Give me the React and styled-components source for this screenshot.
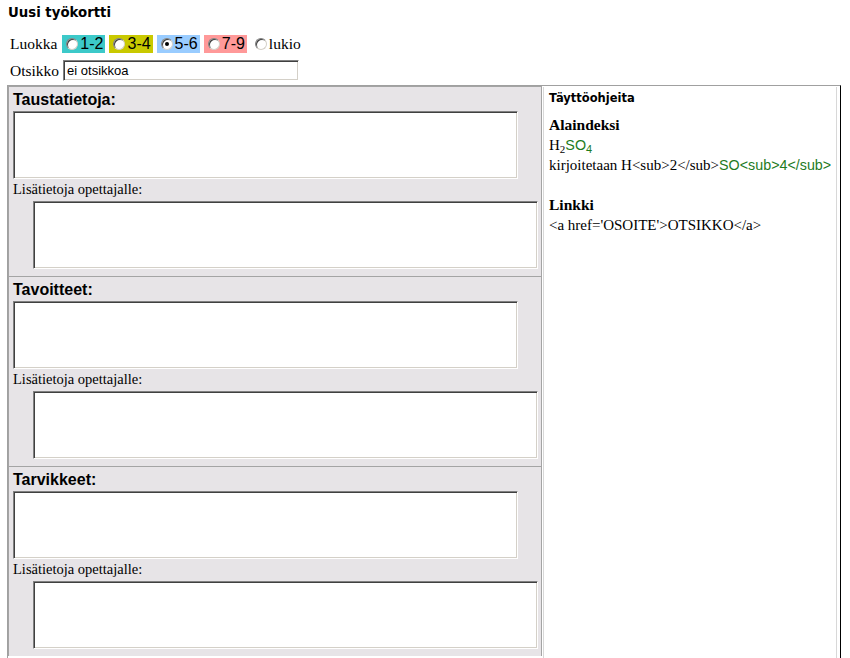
import React from "react";
import styled, { createGlobalStyle } from "styled-components";

const GlobalStyle = createGlobalStyle`
  html, body {
    margin: 0;
    padding: 0;
    background: #fff;
    color: #000;
    font-family: "Liberation Serif", "Times New Roman", serif;
  }
`;

const Page = styled.div`
  padding-top: 5px;
  width: 850px;
  height: 658px;
  overflow: hidden;
`;

const Title = styled.div`
  margin-left: 8px;
  font-family: "DejaVu Sans", Verdana, sans-serif;
  font-weight: bold;
  font-size: 13.3px;
  line-height: 16px;
`;

const FormRow = styled.div`
  display: flex;
  align-items: center;
  margin-left: 10px;
  margin-top: ${(p) => p.$top}px;
  height: ${(p) => p.$height}px;
  font-size: 15.5px;
`;

const RowLabel = styled.span`
  margin-right: ${(p) => p.$gap || 4}px;
`;

const Choice = styled.label`
  display: flex;
  align-items: center;
  height: 18px;
  padding: 0 2px 0 4px;
  margin-right: 4px;
  background: ${(p) => p.$bg || "transparent"};
  font-family: ${(p) =>
    p.$serif ? '"Liberation Serif", serif' : '"Liberation Sans", Arial, sans-serif'};
  font-size: ${(p) => (p.$serif ? 15.5 : 16)}px;
`;

const Radio = styled.span`
  position: relative;
  display: inline-block;
  box-sizing: border-box;
  width: 12px;
  height: 12px;
  margin-right: 2px;
  border-radius: 50%;
  background: #fff;
  border: 1px solid #808080;
  border-right-color: #d4d0c8;
  border-bottom-color: #d4d0c8;
  box-shadow: inset 1px 1px 0 #404040;

  &::after {
    content: "";
    display: ${(p) => (p.$checked ? "block" : "none")};
    position: absolute;
    left: 3px;
    top: 3px;
    width: 4px;
    height: 4px;
    border-radius: 50%;
    background: #000;
  }
`;

const TextInput = styled.div`
  box-sizing: border-box;
  width: 236px;
  height: 21px;
  padding: 1px 3px;
  background: #fff;
  border: 1px solid #808080;
  border-right-color: #fff;
  border-bottom-color: #fff;
  box-shadow: inset 1px 1px 0 #404040, inset -1px -1px 0 #d4d0c8;
  font-family: "Liberation Sans", Arial, sans-serif;
  font-size: 13px;
  line-height: 17px;
`;

const Table = styled.div`
  display: flex;
  box-sizing: border-box;
  width: 834px;
  height: 580px;
  margin: 4px 0 0 7px;
  background: #fff;
  border-top: 1px solid #a0a0a0;
  border-left: 1px solid #a0a0a0;
  border-right: 1px solid #000;
`;

const LeftCol = styled.div`
  width: 534px;
  flex-shrink: 0;
  display: flex;
  flex-direction: column;
`;

const Section = styled.div`
  box-sizing: border-box;
  height: 190px;
  flex-shrink: 0;
  padding: 4px 0 7px 4px;
  background: #e7e4e7;
  border-top: 1px solid #a4a4a4;
  border-left: 1px solid #a4a4a4;
  border-right: 1px solid #a4a4a4;
`;

const Heading = styled.div`
  font-family: "Liberation Sans", Arial, sans-serif;
  font-weight: bold;
  font-size: 16px;
  line-height: 18px;
`;

const Area = styled.div`
  box-sizing: border-box;
  width: 505px;
  height: 68px;
  margin-top: ${(p) => p.$top}px;
  margin-left: ${(p) => p.$indent || 0}px;
  background: #fff;
  border: 1px solid #808080;
  border-right-color: #fff;
  border-bottom-color: #fff;
  box-shadow: inset 1px 1px 0 #404040, inset -1px -1px 0 #d4d0c8;
`;

const SubLabel = styled.div`
  margin-top: 2px;
  font-size: 14.5px;
  line-height: 16px;
`;

const RightCol = styled.div`
  flex: 1;
  margin: 1px 3px 0 1px;
  padding: 3px 5px;
  border-left: 1px solid #d8d8d8;
  border-right: 1px solid #d8d8d8;
  font-size: 15px;
  line-height: 20px;
`;

const HelpTitle = styled.div`
  font-family: "DejaVu Sans", Verdana, sans-serif;
  font-weight: bold;
  font-size: 11.5px;
  line-height: 16px;
  margin-bottom: 9px;
`;

const HelpHead = styled.div`
  font-weight: bold;
  font-size: 15.5px;
`;

const HelpLine = styled.div`
  white-space: nowrap;
  height: 20px;
`;

const Green = styled.span`
  color: #1e7b1e;
  font-family: "Liberation Sans", Arial, sans-serif;
  font-size: 14.3px;
`;

const Sub = styled.sub`
  font-size: 11px;
  line-height: 0;
  vertical-align: -3px;
`;

const classes = [
  { label: "1-2", bg: "#3cc9c9" },
  { label: "3-4", bg: "#c9c900" },
  { label: "5-6", bg: "#99ccff", checked: true },
  { label: "7-9", bg: "#ff9999" },
  { label: "lukio", serif: true },
];

const sections = ["Taustatietoja:", "Tavoitteet:", "Tarvikkeet:"];

function App() {
  return (
    <Page>
      <GlobalStyle />
      <Title>Uusi työkortti</Title>

      <FormRow $top={14} $height={18}>
        <RowLabel $gap={5}>Luokka</RowLabel>
        {classes.map((c) => (
          <Choice key={c.label} $bg={c.bg} $serif={c.serif}>
            <Radio $checked={c.checked} />
            {c.label}
          </Choice>
        ))}
      </FormRow>

      <FormRow $top={7} $height={21}>
        <RowLabel>Otsikko</RowLabel>
        <TextInput>ei otsikkoa</TextInput>
      </FormRow>

      <Table>
        <LeftCol>
          {sections.map((s) => (
            <Section key={s}>
              <Heading>{s}</Heading>
              <Area $top={2} />
              <SubLabel>Lisätietoja opettajalle:</SubLabel>
              <Area $top={4} $indent={20} />
            </Section>
          ))}
        </LeftCol>

        <RightCol>
          <HelpTitle>Täyttöohjeita</HelpTitle>
          <HelpHead>Alaindeksi</HelpHead>
          <HelpLine>
            H<Sub>2</Sub>
            <Green>
              SO<Sub>4</Sub>
            </Green>
          </HelpLine>
          <HelpLine>
            kirjoitetaan H&lt;sub&gt;2&lt;/sub&gt;
            <Green>SO&lt;sub&gt;4&lt;/sub&gt;</Green>
          </HelpLine>
          <HelpLine />
          <HelpHead>Linkki</HelpHead>
          <HelpLine>&lt;a href='OSOITE'&gt;OTSIKKO&lt;/a&gt;</HelpLine>
        </RightCol>
      </Table>
    </Page>
  );
}

export default App;
